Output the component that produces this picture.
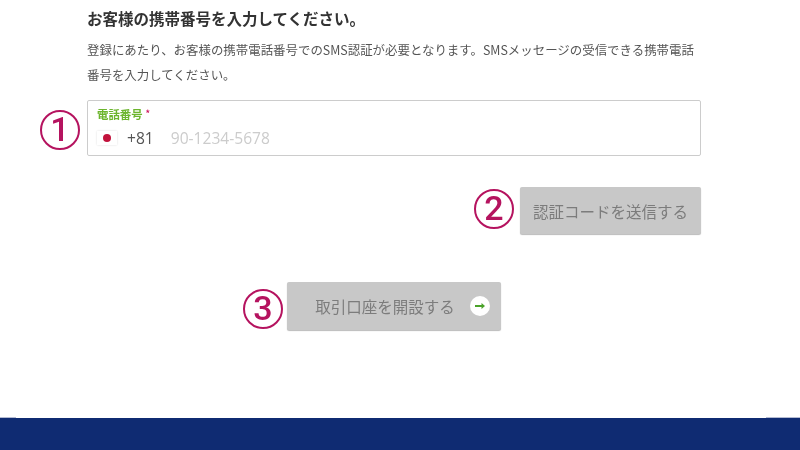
<style>
:global(body){margin:0;background:#fff}
.page{width:800px;height:450px;display:flex;flex-direction:column;overflow:hidden;font-family:"Noto Sans CJK JP","Open Sans",sans-serif}
.main{flex:1;box-sizing:border-box;padding:8px 99px 0 87px;min-height:0;filter:blur(.35px)}
h1{margin:0;font-size:15.5px;line-height:20px;font-weight:700;color:#333;white-space:nowrap}
.lead{margin:10px 0 0;font-size:12.45px;line-height:25px;color:#555;white-space:pre-line}
.field{position:relative;margin-top:12px;height:56px;box-sizing:border-box;border:1.5px solid #ccc;border-radius:2px;padding:6px 9px 0}
.label{font-size:11.4px;line-height:14px;font-weight:700;color:#6cb52d;display:flex;gap:3px}
.label i{color:#d0175f;font-style:normal;font-size:9px}
.tel{display:flex;align-items:center;height:24px;margin-top:5px;font-family:"Open Sans",sans-serif;font-size:15.6px}
.flag{width:20px;height:14px;background:#fff;box-shadow:0 0 2px #ddd;display:flex;align-items:center;justify-content:center;margin-right:10px}
.flag b{width:8px;height:8px;border-radius:50%;background:#c2123c}
.code{color:#555;margin-right:17px}
.ph{color:#ccc}
.row{position:relative;display:flex}
.send-row{justify-content:flex-end;margin-top:31px}
.open-row{justify-content:flex-start;margin:48px 0 0 200px}
.btn{box-sizing:border-box;border:0;background:#c8c8c8;color:#7c7c7c;border-radius:2px;font-family:inherit;font-size:15.5px;box-shadow:0 1px 1px #bbb;display:flex;align-items:center;justify-content:center;padding:0}
.send{width:181px;height:47px}
.open{width:214px;height:48px;position:relative;padding-right:18px}
.go{position:absolute;right:11px;top:14px;width:20px;height:20px;border-radius:50%;background:#fff;display:flex;align-items:center;justify-content:center}
.badge{position:absolute;box-sizing:border-box;width:40px;height:40px;border:2.5px solid #b5135f;border-radius:50%;color:#b5135f;font-family:Roboto,sans-serif;font-weight:500;font-size:34px;line-height:35px;text-align:center;background:#fff}
.b1{left:-48px;top:9px}
.b2{right:187px;top:2px}
.b3{left:-44px;top:7px}
footer{height:32px;background:#0f2b72;flex:none;position:relative}
footer::before,footer::after{content:"";position:absolute;top:-1px;height:1px;background:#b4bbd2}
footer::before{left:0;width:16px}
footer::after{right:0;width:34px}
</style>

<div class="page">
	<main class="main">
		<h1>お客様の携帯番号を入力してください。</h1>
		<p class="lead">登録にあたり、お客様の携帯電話番号でのSMS認証が必要となります。SMSメッセージの受信できる携帯電話
番号を入力してください。</p>
		<div class="field">
			<span class="badge b1">1</span>
			<div class="label">電話番号<i>*</i></div>
			<div class="tel">
				<span class="flag"><b></b></span>
				<span class="code">+81</span>
				<span class="ph">90-1234-5678</span>
			</div>
		</div>
		<div class="row send-row">
			<span class="badge b2">2</span>
			<button class="btn send">認証コードを送信する</button>
		</div>
		<div class="row open-row">
			<span class="badge b3">3</span>
			<button class="btn open">取引口座を開設する
				<span class="go">
					<svg width="12" height="8" viewBox="0 0 12 8"><path d="M1 4h8" stroke="#4aa32a" stroke-width="2"/><path d="M7.5 1l3.5 3-3.5 3z" fill="#4aa32a"/></svg>
				</span>
			</button>
		</div>
	</main>
	<footer></footer>
</div>
